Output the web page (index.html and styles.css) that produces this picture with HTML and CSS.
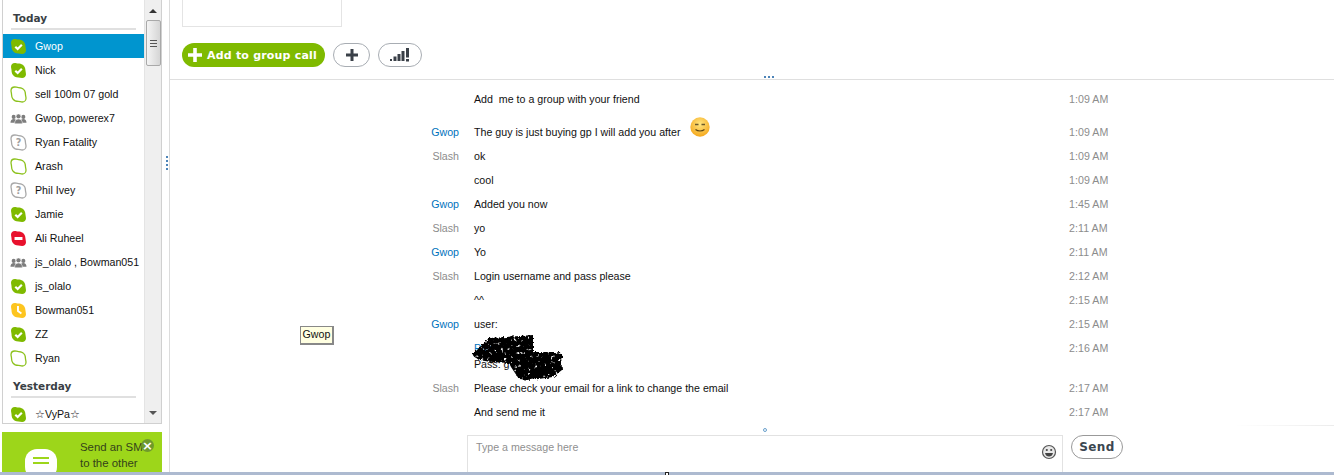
FILE: index.html
```html
<!DOCTYPE html>
<html lang="en">
<head>
  <meta charset="UTF-8">
  <meta name="viewport" content="width=device-width, initial-scale=1.0">
  <title>Conversation</title>
  <link rel="stylesheet" href="styles.css">
</head>
<body>
  <!-- status icon shapes -->
  <svg class="defs" width="0" height="0">
    <defs>
      <path id="blob" d="M4.5 1C5.600 1 6.500 1.500 8 1.500 10 1.500 14.500 2.500 14.500 8 14.500 9 15 10.200 15 11.400 15 13.400 13.400 15 11.400 15 10.200 15 9 14.500 8 14.500 2.500 14.500 1.500 10 1.500 8 1.500 6.500 1 5.600 1 4.500 1 2.500 2.500 1 4.500 1Z"/>
      <g id="ic-online"><use href="#blob" fill="#7fba00"/><path d="M5 8.200l2.200 2.100 3.900-4" fill="none" stroke="#fff" stroke-width="2"/></g>
      <g id="ic-offline"><use href="#blob" fill="#fff" stroke="#8cc11c" stroke-width="1.200"/></g>
      <g id="ic-unknown"><use href="#blob" fill="#fff" stroke="#a8a8a8" stroke-width="1.200"/><text x="8" y="11.500" text-anchor="middle" class="q">?</text></g>
      <g id="ic-busy"><use href="#blob" fill="#e8112d"/><rect x="4.300" y="6.600" width="7.400" height="2.800" fill="#fff"/></g>
      <g id="ic-away"><use href="#blob" fill="#fdc520"/><path d="M7.500 3.800v4.600l3.200 2.400" fill="none" stroke="#fff" stroke-width="1.800"/></g>
      <g id="ic-group" fill="#7d7d7d"><circle cx="3.500" cy="6.500" r="1.900"/><circle cx="12.500" cy="6.500" r="1.900"/><path d="M0.500 12c0-2.400 1.200-3.600 3-3.600s3 1.200 3 3.600zM9.500 12c0-2.400 1.200-3.600 3-3.600s3 1.200 3 3.600z"/><circle cx="8" cy="6" r="2.300" stroke="#fff" stroke-width=".5"/><path d="M4.300 13c0-3 1.500-4.500 3.700-4.500s3.700 1.500 3.700 4.500z" stroke="#fff" stroke-width=".5"/></g>
    </defs>
  </svg>

  <div class="app">
    <aside class="sidebar">
      <div class="recent">
        <div class="recent-list">
          <h3 class="group-title">Today</h3>
          <div class="contact selected"><svg class="status" viewBox="1 1 14 14"><use href="#ic-online"/></svg>Gwop</div>
          <div class="contact"><svg class="status" viewBox="1 1 14 14"><use href="#ic-online"/></svg>Nick</div>
          <div class="contact"><svg class="status" viewBox="1 1 14 14"><use href="#ic-offline"/></svg>sell 100m 07 gold</div>
          <div class="contact"><svg class="status" viewBox="1 1 14 14"><use href="#ic-group"/></svg>Gwop, powerex7</div>
          <div class="contact"><svg class="status" viewBox="1 1 14 14"><use href="#ic-unknown"/></svg>Ryan Fatality</div>
          <div class="contact"><svg class="status" viewBox="1 1 14 14"><use href="#ic-offline"/></svg>Arash</div>
          <div class="contact"><svg class="status" viewBox="1 1 14 14"><use href="#ic-unknown"/></svg>Phil Ivey</div>
          <div class="contact"><svg class="status" viewBox="1 1 14 14"><use href="#ic-online"/></svg>Jamie</div>
          <div class="contact"><svg class="status" viewBox="1 1 14 14"><use href="#ic-busy"/></svg>Ali Ruheel</div>
          <div class="contact"><svg class="status" viewBox="1 1 14 14"><use href="#ic-group"/></svg>js_olalo , Bowman051</div>
          <div class="contact"><svg class="status" viewBox="1 1 14 14"><use href="#ic-online"/></svg>js_olalo</div>
          <div class="contact"><svg class="status" viewBox="1 1 14 14"><use href="#ic-away"/></svg>Bowman051</div>
          <div class="contact"><svg class="status" viewBox="1 1 14 14"><use href="#ic-online"/></svg>ZZ</div>
          <div class="contact"><svg class="status" viewBox="1 1 14 14"><use href="#ic-offline"/></svg>Ryan</div>
          <h3 class="group-title later">Yesterday</h3>
          <div class="contact"><svg class="status" viewBox="1 1 14 14"><use href="#ic-online"/></svg>☆VyPa☆</div>
        </div>
        <div class="scrollbar">
          <span class="arrow up"></span>
          <div class="thumb"><i></i><i></i><i></i></div>
          <span class="arrow down"></span>
        </div>
      </div>
      <div class="sms-promo">
        <div class="sms-bubble"><i></i><i></i></div>
        <div class="sms-text">Send an SMS<br>to the other</div>
        <span class="sms-close">×</span>
      </div>
    </aside>

    <div class="splitter"><i></i><i></i><i></i><i></i></div>

    <main class="main">
      <section class="call-area">
        <div class="video-box"></div>
        <div class="call-buttons">
          <button class="btn-add"><svg viewBox="0 0 14 14" width="14" height="14"><path d="M5.200 0h3.600v5.200h5.200v3.600h-5.200v5.200h-3.600v-5.200h-5.200v-3.600h5.200z" fill="#fff"/></svg>Add to group call</button>
          <button class="btn-pill"><svg viewBox="0 0 14 14" width="14" height="14"><path d="M5.500 1h3v4.500h4.500v3h-4.500v4.500h-3v-4.500h-4.500v-3h4.500z" fill="#3a4048"/></svg></button>
          <button class="btn-pill wide"><svg viewBox="0 0 20 14" width="20" height="14" fill="#3a4048"><rect x="0" y="11" width="2" height="2"/><rect x="3.500" y="8.500" width="3" height="4.500"/><rect x="7.500" y="6" width="3" height="7"/><rect x="11.500" y="3" width="3" height="10"/><rect x="16" y="0" width="3" height="9.500"/><rect x="16" y="11" width="3" height="2.500"/></svg></button>
        </div>
        <div class="grip"><i></i><i></i><i></i></div>
      </section>

      <section class="chat">
        <div class="msg"><span class="who"></span><span class="text">Add&nbsp; me to a group with your friend</span><span class="time">1:09 AM</span></div>
        <div class="msg tall"><span class="who them">Gwop</span><span class="text">The guy is just buying gp I will add you after
          <svg class="smiley" viewBox="0 0 20 20" width="20" height="20"><defs><radialGradient id="face" cx="50%" cy="35%" r="65%"><stop offset="0" stop-color="#ffe680"/><stop offset="1" stop-color="#f5a81c"/></radialGradient></defs><circle cx="10" cy="10" r="9.700" fill="url(#face)"/><path d="M5 7.500h3.500M11.500 7.500h3.500" stroke="#6b5a2a" stroke-width="1.300"/><path d="M5.500 12.500c2.500 2 6.500 2 9 0" fill="none" stroke="#5a4413" stroke-width="1.200"/></svg></span><span class="time">1:09 AM</span></div>
        <div class="msg"><span class="who">Slash</span><span class="text">ok</span><span class="time">1:09 AM</span></div>
        <div class="msg"><span class="who"></span><span class="text">cool</span><span class="time">1:09 AM</span></div>
        <div class="msg"><span class="who them">Gwop</span><span class="text">Added you now</span><span class="time">1:45 AM</span></div>
        <div class="msg"><span class="who">Slash</span><span class="text">yo</span><span class="time">2:11 AM</span></div>
        <div class="msg"><span class="who them">Gwop</span><span class="text">Yo</span><span class="time">2:11 AM</span></div>
        <div class="msg"><span class="who">Slash</span><span class="text">Login username and pass please</span><span class="time">2:12 AM</span></div>
        <div class="msg"><span class="who"></span><span class="text">^^</span><span class="time">2:15 AM</span></div>
        <div class="msg"><span class="who them">Gwop</span><span class="text">user:</span><span class="time">2:15 AM</span></div>
        <div class="msg"><span class="who"></span><span class="text"><span class="link">Pass</span><br>Pass: g</span><span class="time">2:16 AM</span></div>
        <div class="msg"><span class="who">Slash</span><span class="text">Please check your email for a link to change the email</span><span class="time">2:17 AM</span></div>
        <div class="msg"><span class="who"></span><span class="text">And send me it</span><span class="time">2:17 AM</span></div>
      </section>

      <div class="handle-row"><span class="handle"></span><span class="fade-line"></span></div>

      <section class="composer">
        <div class="input-box">
          <span class="placeholder">Type a message here</span>
          <svg viewBox="0 0 16 16" width="16" height="16"><circle cx="8" cy="8" r="6.500" fill="#e8e8e8" stroke="#555" stroke-width="1.200"/><circle cx="5.800" cy="6" r="1.100" fill="#444"/><circle cx="10.200" cy="6" r="1.100" fill="#444"/><path d="M4 9h8c-.5 2.500-2 3.500-4 3.500s-3.500-1-4-3.500z" fill="#444"/></svg>
        </div>
        <button class="btn-send">Send</button>
      </section>
    </main>
  </div>
  <div class="taskbar"><span class="cursor-mark"></span></div>

  <!-- things lying over the page -->
  <div class="tooltip">Gwop</div>
  <svg class="scribble" viewBox="0 0 100 50" width="100" height="50">
    <defs>
      <filter id="rough" x="-10%" y="-10%" width="120%" height="120%">
        <feTurbulence type="fractalNoise" baseFrequency=".3" numOctaves="2" seed="4" result="noise"/>
        <feDisplacementMap in="SourceGraphic" in2="noise" scale="5" result="shape"/>
        <feColorMatrix in="noise" type="matrix" values="0 0 0 0 0  0 0 0 0 0  0 0 0 0 0  6 0 0 0 -1.200" result="spots"/>
        <feComposite in="shape" in2="spots" operator="in" result="speckled"/>
        <feGaussianBlur in="speckled" stdDeviation=".7"/>
      </filter>
    </defs>
    <path filter="url(#rough)" d="M1 20L18 3 35 2 62 0 62 17 90 17 91 35 82 42 60 45 48 44 40 32 38 28 20 27 8 25z" fill="#050505"/>
  </svg>
</body>
</html>
```

FILE: styles.css
```css
* {
  box-sizing: border-box;
}
html, body {
  height: 100%;
}
body {
  margin: 0;
  height: 475px;
  overflow: hidden;
  background: #fff;
  color: #111;
  font-family: "Liberation Sans", Arial, sans-serif;
  font-size: 10.65px;
  display: flex;
  flex-direction: column;
}
.defs {
  position: absolute;
}
.q {
  font-family: "DejaVu Sans", sans-serif;
  font-size: 9px;
  font-weight: bold;
  fill: #a0a0a0;
}
.app {
  flex: 1;
  display: flex;
  min-height: 0;
}
.taskbar {
  height: 3px;
  background: #adbad0;
  display: flex;
  padding-left: 665px;
}
.cursor-mark {
  width: 4px;
  height: 3px;
  background: #fff;
  border: 1px solid #222;
  border-bottom: 0;
}

/* left column */
.sidebar {
  width: 166px;
  padding-left: 2px;
  display: flex;
  flex-direction: column;
}
.recent {
  width: 160px;
  height: 424px;
  border: 1px solid #d0d0d0;
  border-top: 0;
  display: flex;
  overflow: hidden;
}
.recent-list {
  width: 141px;
  flex: none;
}
.group-title {
  margin: 0 0 4px 8px;
  width: 125px;
  height: 30px;
  padding: 12px 0 0 2px;
  font-family: "DejaVu Sans", sans-serif;
  font-size: 10.5px;
  line-height: 13px;
  font-weight: bold;
  color: #3a3f45;
  border-bottom: 2px solid #e0e0e0;
}
.group-title.later {
  height: 28px;
  padding-top: 10px;
}
.contact {
  height: 24px;
  display: flex;
  align-items: center;
  padding-left: 8px;
  gap: 9px;
  white-space: nowrap;
  overflow: hidden;
}
.contact.selected {
  background: #0095cf;
  color: #fff;
}
.status {
  width: 15px;
  height: 15px;
  flex: none;
  overflow: visible;
}
.scrollbar {
  flex: 1;
  background: #efefef;
  display: flex;
  flex-direction: column;
  align-items: center;
  border-left: 1px solid #e4e4e4;
}
.arrow {
  width: 0;
  height: 0;
  border-left: 4px solid transparent;
  border-right: 4px solid transparent;
}
.arrow.up {
  border-bottom: 4px solid #333;
  margin-top: 9px;
}
.arrow.down {
  border-top: 4px solid #555;
  margin-top: auto;
  margin-bottom: 8px;
}
.thumb {
  width: 15px;
  height: 46px;
  margin-top: 7px;
  border: 1px solid #a9a9a9;
  border-radius: 2px;
  background: linear-gradient(to right, #f4f4f4, #d5d5d5);
  display: flex;
  flex-direction: column;
  align-items: center;
  justify-content: center;
  gap: 2px;
}
.thumb i {
  width: 7px;
  height: 1px;
  background: #555;
}
.sms-promo {
  width: 160px;
  height: 40px;
  margin-top: 8px;
  background: #9dd61a;
  display: flex;
  overflow: hidden;
  position: relative;
}
.sms-bubble {
  width: 32px;
  height: 30px;
  margin: 17px 0 0 23px;
  flex: none;
  background: #fff;
  border-radius: 12px;
  display: flex;
  flex-direction: column;
  align-items: center;
  gap: 3px;
  padding-top: 8px;
}
.sms-bubble i {
  width: 16px;
  height: 2px;
  background: #9dd61a;
}
.sms-text {
  margin: 7px 0 0 23px;
  font-size: 11.4px;
  line-height: 16px;
  white-space: nowrap;
  color: #34421a;
}
.sms-close {
  position: absolute;
  left: 139px;
  top: 7px;
  width: 13px;
  height: 13px;
  border-radius: 50%;
  background: #6f9a2c;
  color: #fff;
  font: bold 13px/13px "DejaVu Sans", sans-serif;
  text-align: center;
}

/* divider between columns */
.splitter {
  width: 4px;
  border-right: 1px solid #dcdcdc;
  display: flex;
  flex-direction: column;
  gap: 2px;
  padding-top: 156px;
}
.splitter i {
  width: 2px;
  height: 2px;
  background: #4d84b8;
}

/* right column */
.main {
  flex: 1;
  display: flex;
  flex-direction: column;
  min-width: 0;
}
.call-area {
  height: 80px;
  flex: none;
  border-bottom: 1px solid #dfdfdf;
  padding-left: 12px;
  position: relative;
}
.video-box {
  width: 160px;
  height: 27px;
  border: 1px solid #e4e4e4;
  border-top: 0;
}
.call-buttons {
  display: flex;
  gap: 8px;
  margin-top: 16px;
}
.call-buttons button {
  font-family: "DejaVu Sans", sans-serif;
  cursor: pointer;
}
.btn-add {
  height: 24px;
  width: 143px;
  border: 0;
  padding: 0 0 0 6px;
  border-radius: 12px;
  background: #7fba00;
  color: #fff;
  font-size: 11px;
  letter-spacing: .2px;
  font-weight: bold;
  display: flex;
  align-items: center;
  gap: 5px;
  white-space: nowrap;
}
.btn-pill {
  height: 24px;
  width: 37px;
  padding: 0;
  border: 1px solid #a8adb3;
  border-radius: 12px;
  background: #fff;
  display: flex;
  align-items: center;
  justify-content: center;
}
.btn-pill.wide {
  width: 44px;
}
.grip {
  position: absolute;
  left: 594px;
  top: 76px;
  display: flex;
  gap: 2px;
}
.grip i {
  width: 2px;
  height: 2px;
  background: #4d84b8;
}
.chat {
  flex: none;
  height: 344px;
  padding-top: 7px;
}
.msg {
  display: flex;
  padding: 4px 0;
  line-height: 16px;
}
.msg.tall {
  padding-top: 13px;
}
.who {
  width: 289px;
  flex: none;
  text-align: right;
  color: #8c8c8c;
}
.who.them {
  color: #0072bc;
}
.text {
  width: 595px;
  flex: none;
  margin-left: 15px;
  white-space: nowrap;
}
.link {
  color: #0072bc;
}
.time {
  color: #8c8c8c;
  letter-spacing: .05px;
}
.smiley {
  margin: -12px 0 -2px 7px;
  vertical-align: 1px;
}
.handle-row {
  height: 8px;
  display: flex;
  justify-content: space-between;
  padding-left: 593px;
}
.handle {
  width: 4px;
  height: 4px;
  margin-top: 4px;
  border: 1px solid #6aa0cc;
  border-radius: 50%;
}
.fade-line {
  width: 100px;
  height: 1px;
  margin-top: 1px;
  background: linear-gradient(to right, #fff, #ececec);
}
.composer {
  flex: 1;
  margin-top: 3px;
  display: flex;
  gap: 8px;
  padding-left: 297px;
}
.input-box {
  width: 596px;
  height: 37px;
  border: 1px solid #e2e2e2;
  border-bottom: 0;
  display: flex;
  justify-content: space-between;
  padding: 5px 5px 0 8px;
}
.placeholder {
  color: #8f8f8f;
}
.input-box svg {
  margin-top: 3px;
}
.btn-send {
  width: 52px;
  height: 24px;
  padding: 0;
  border: 1px solid #999;
  border-radius: 12px;
  background: #fff;
  color: #3a4650;
  font: bold 12px "DejaVu Sans", sans-serif;
  letter-spacing: .4px;
}
.tooltip {
  position: absolute;
  left: 300px;
  top: 326px;
  width: 34px;
  height: 19px;
  background: #ffffe1;
  border: 1px solid #888;
  border-right-width: 2px;
  border-bottom-width: 2px;
  line-height: 15px;
  text-align: center;
  color: #111;
}
.scribble {
  position: absolute;
  left: 471px;
  top: 335px;
}
```
